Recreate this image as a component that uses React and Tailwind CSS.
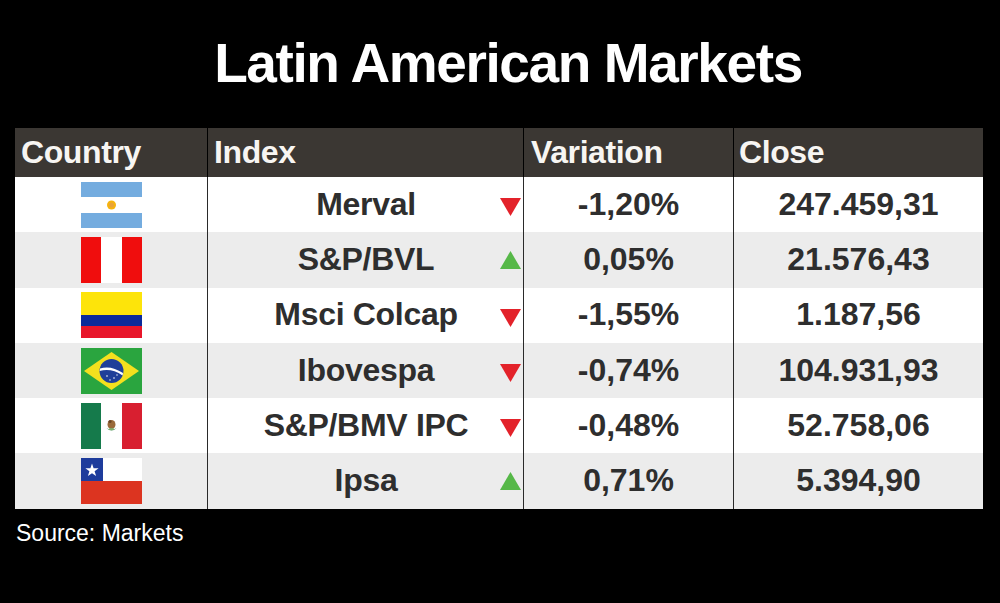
const font = { fontFamily: '"Liberation Sans", Arial, sans-serif' };

const Argentina = () => (
  <svg width="61" height="46" viewBox="0 0 61 46">
    <rect width="61" height="46" fill="#ffffff" />
    <rect width="61" height="15" fill="#74acdf" />
    <rect y="31" width="61" height="15" fill="#74acdf" />
    <circle cx="30.5" cy="23" r="4.5" fill="#f6b40e" />
    <circle cx="30.5" cy="23" r="2.5" fill="#e8a33a" />
  </svg>
);

const Peru = () => (
  <svg width="61" height="46" viewBox="0 0 61 46">
    <rect width="61" height="46" fill="#ffffff" />
    <rect width="20" height="46" fill="#f00d0d" />
    <rect x="41" width="20" height="46" fill="#f00d0d" />
  </svg>
);

const Colombia = () => (
  <svg width="61" height="46" viewBox="0 0 61 46">
    <rect width="61" height="23" fill="#fde40a" />
    <rect y="23" width="61" height="11" fill="#0a2a9a" />
    <rect y="34" width="61" height="12" fill="#e8162a" />
  </svg>
);

const Brazil = () => (
  <svg width="61" height="46" viewBox="0 0 61 46">
    <rect width="61" height="46" fill="#2aa53f" />
    <polygon points="30.5,4 58,23 30.5,42 3,23" fill="#f4e01e" />
    <circle cx="30.5" cy="23" r="12" fill="#1f3f99" />
    <path d="M19 20.5 Q30 17 42 25 L41.6 27.4 Q30 19.6 18.7 23 Z" fill="#ffffff" />
    <circle cx="26" cy="28" r="0.8" fill="#ffffff" />
    <circle cx="33" cy="30" r="0.8" fill="#ffffff" />
    <circle cx="36" cy="27" r="0.7" fill="#ffffff" />
    <circle cx="29" cy="32" r="0.7" fill="#ffffff" />
  </svg>
);

const Mexico = () => (
  <svg width="61" height="46" viewBox="0 0 61 46">
    <rect width="61" height="46" fill="#ffffff" />
    <rect width="20" height="46" fill="#157a4b" />
    <rect x="41" width="20" height="46" fill="#d81f30" />
    <ellipse cx="30.5" cy="21.5" rx="4" ry="4.5" fill="#9a6a3a" />
    <circle cx="29" cy="18.5" r="1.6" fill="#6b4423" />
    <path d="M25.5 25 Q30.5 30 35.5 25 Q30.5 28 25.5 25 Z" fill="#3f8a4a" />
    <ellipse cx="30.5" cy="26" rx="2.5" ry="1" fill="#7fae6a" />
  </svg>
);

const Chile = () => (
  <svg width="61" height="46" viewBox="0 0 61 46">
    <rect width="61" height="23" fill="#ffffff" />
    <rect y="23" width="61" height="23" fill="#dc3420" />
    <rect width="22" height="23" fill="#1e3c9c" />
    <polygon
      points="11,5.5 12.6,10.2 17.6,10.3 13.6,13.3 15.1,18 11,15.2 6.9,18 8.4,13.3 4.4,10.3 9.4,10.2"
      fill="#ffffff"
    />
  </svg>
);

const rows = [
  { flag: Argentina, index: "Merval", up: false, variation: "-1,20%", close: "247.459,31" },
  { flag: Peru, index: "S&P/BVL", up: true, variation: "0,05%", close: "21.576,43" },
  { flag: Colombia, index: "Msci Colcap", up: false, variation: "-1,55%", close: "1.187,56" },
  { flag: Brazil, index: "Ibovespa", up: false, variation: "-0,74%", close: "104.931,93" },
  { flag: Mexico, index: "S&P/BMV IPC", up: false, variation: "-0,48%", close: "52.758,06" },
  { flag: Chile, index: "Ipsa", up: true, variation: "0,71%", close: "5.394,90" },
];

const Triangle = ({ up }) =>
  up ? (
    <svg width="21" height="18" viewBox="0 0 21 18" className="shrink-0">
      <polygon points="10.5,0 21,18 0,18" fill="#56b848" />
    </svg>
  ) : (
    <svg width="21" height="18" viewBox="0 0 21 18" className="shrink-0 mt-[5px]">
      <polygon points="0,0 21,0 10.5,18" fill="#e3222a" />
    </svg>
  );

export default function App() {
  return (
    <div className="w-[1000px] h-[603px] bg-black overflow-hidden" style={font}>
      <h1 className="pt-[36px] pl-[16px] text-center text-white font-bold text-[55px] leading-none tracking-[-1.4px]">
        Latin American Markets
      </h1>

      <div className="mt-[37px] ml-[15px] w-[968px]">
        <div className="grid grid-cols-[192px_316px_210px_250px] h-[49px] bg-[#3b3733] text-[#f7f5f2] font-bold text-[32px] tracking-[-0.4px]">
          <div className="flex items-center pl-[6px] pb-[3px]">Country</div>
          <div className="flex items-center pl-[6px] pb-[3px] border-l border-black">Index</div>
          <div className="flex items-center pl-[7px] pb-[3px] border-l border-black">Variation</div>
          <div className="flex items-center pl-[5px] pb-[3px] border-l border-black">Close</div>
        </div>

        {rows.map((r, i) => {
          const Flag = r.flag;
          return (
            <div
              key={r.index}
              className={`grid grid-cols-[192px_316px_210px_250px] h-[55.3px] text-[#2e2e2e] font-bold text-[32px] ${
                i % 2 === 0 ? "bg-white" : "bg-[#ececec]"
              }`}
            >
              <div className="flex items-center justify-center">
                <Flag />
              </div>
              <div className="flex items-center pl-[24px] pr-[2px] border-l border-[#2a2a2a]">
                <span className="flex-1 text-center pb-[2px] tracking-[-0.3px]">{r.index}</span>
                <Triangle up={r.up} />
              </div>
              <div className="flex items-center justify-center pb-[2px] border-l border-[#2a2a2a]">
                {r.variation}
              </div>
              <div className="flex items-center justify-center pb-[2px] border-l border-[#2a2a2a]">
                {r.close}
              </div>
            </div>
          );
        })}
      </div>

      <p className="mt-[13px] ml-[16px] text-white text-[23px] leading-[22px]">
        Source: Markets
      </p>
    </div>
  );
}
